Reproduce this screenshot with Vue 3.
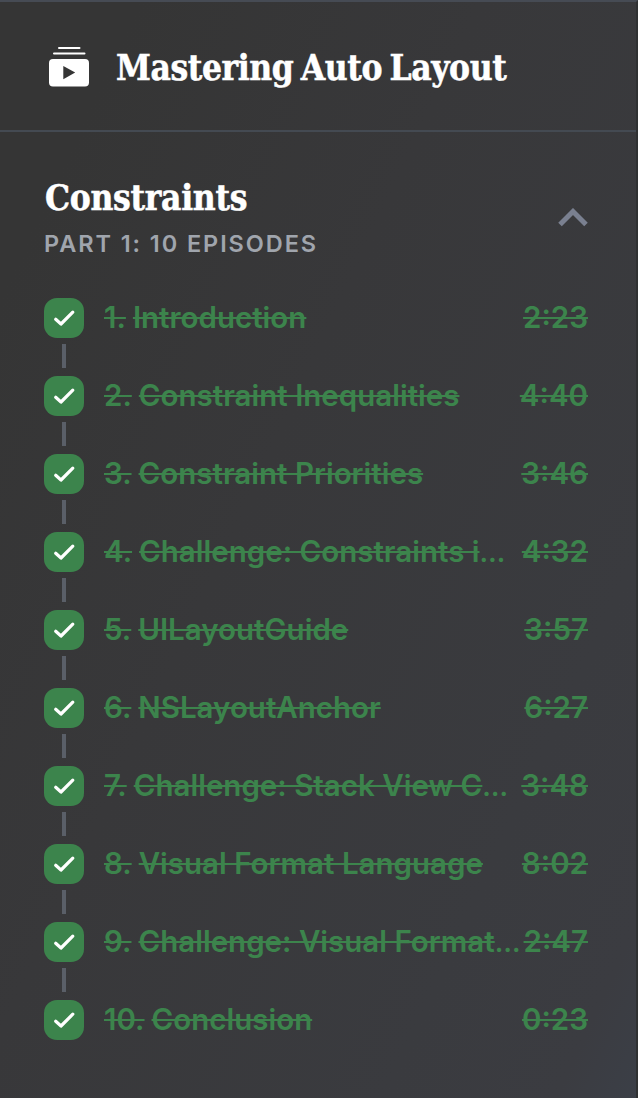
<script setup>
const episodes = [
  { number: 1, title: 'Introduction', time: '2:23' },
  { number: 2, title: 'Constraint Inequalities', time: '4:40' },
  { number: 3, title: 'Constraint Priorities', time: '3:46' },
  { number: 4, title: 'Challenge: Constraints i', cut: true, time: '4:32' },
  { number: 5, title: 'UILayoutGuide', time: '3:57' },
  { number: 6, title: 'NSLayoutAnchor', time: '6:27' },
  { number: 7, title: 'Challenge: Stack View C', cut: true, time: '3:48' },
  { number: 8, title: 'Visual Format Language', time: '8:02' },
  { number: 9, title: 'Challenge: Visual Format', cut: true, time: '2:47' },
  { number: 10, title: 'Conclusion', time: '0:23' },
]
</script>

<template>
  <aside class="panel">
    <header class="series">
      <svg class="series-icon" width="40" height="40" viewBox="0 0 40 40">
        <path d="M10 1h20.500M5 6.500h30.500" stroke="#fff" stroke-width="2" stroke-linecap="round" />
        <path fill="#fff" fill-rule="evenodd" d="M4 12H36a4 4 0 0 1 4 4V35.500a4 4 0 0 1-4 4H4a4 4 0 0 1-4-4V16a4 4 0 0 1 4-4ZM14.300 18.900V32.300L26.200 25.600Z" />
      </svg>
      <h1 class="heading">Mastering Auto Layout</h1>
    </header>
    <section class="chapter">
      <div class="chapter-head">
        <div>
          <h2 class="heading">Constraints</h2>
          <p class="part">Part 1: 10 Episodes</p>
        </div>
        <svg class="chevron" width="30" height="20" viewBox="0 0 30 20">
          <path d="M2 16.500 15 3.500 28 16.500" fill="none" stroke="#7a8090" stroke-width="5" />
        </svg>
      </div>
      <ol class="episodes">
        <li v-for="e in episodes" :key="e.number" class="episode">
          <div class="rail">
            <span class="badge">
              <svg width="40" height="40" viewBox="0 0 40 40">
                <path d="M11.700 21.300 17 26 28.800 14.200" fill="none" stroke="#fff" stroke-width="3.200" stroke-linecap="round" stroke-linejoin="round" />
              </svg>
            </span>
            <span v-if="e.number < 10" class="link"></span>
          </div>
          <span class="struck label">{{ e.number }}.</span>
          <span class="title label"><span class="struck">{{ e.title }}</span><span v-if="e.cut" class="dots">…</span></span>
          <span class="struck label time">{{ e.time }}</span>
        </li>
      </ol>
    </section>
  </aside>
</template>

<style>
body {
  background: #353535;
}
</style>

<style scoped>
.panel {
  box-sizing: border-box;
  width: 638px;
  height: 1098px;
  overflow: hidden;
  border-right: 2px solid #2f3132;
  border-top: 2px solid #464b54;
  background: linear-gradient(115deg, #353535 12%, #38383a 42%, #3a3b3f 78%, #3b3c41 93%, #3b3f47 100%);
  font-family: Inter, "Liberation Sans", sans-serif;
}
.series {
  display: flex;
  align-items: center;
  box-sizing: border-box;
  height: 130px;
  padding: 0 0 0 49px;
  border-bottom: 2px solid #444a52;
}
.series-icon {
  flex: none;
  margin-top: 2px;
}
.heading {
  margin: 0 0 0 1px;
  color: #fff;
  font: bold 35px/44px "DejaVu Serif Condensed", "DejaVu Serif", serif;
  font-stretch: condensed;
  white-space: nowrap;
  letter-spacing: -0.3px;
  -webkit-text-stroke: 0.5px #fff;
}
.series .heading {
  margin: 4px 0 0 27px;
  letter-spacing: -0.4px;
  word-spacing: -3.2px;
}
.chapter {
  padding: 44px 48px 0 44px;
}
.chapter-head {
  display: flex;
  justify-content: space-between;
  align-items: flex-start;
  height: 122px;
}
.part {
  margin: 8px 0 0;
  color: #a0a5ad;
  font-size: 23.5px;
  font-weight: 600;
  line-height: 32px;
  letter-spacing: 1.92px;
  text-transform: uppercase;
}
.chevron {
  margin-top: 32px;
}
.episodes {
  margin: 0;
  padding: 0;
  list-style: none;
}
.episode {
  display: flex;
  height: 78px;
  color: #3c844c;
  font-size: 29.5px;
  font-weight: 600;
  line-height: 40px;
  white-space: nowrap;
}
.label {
  margin-top: -1px;
}
.rail {
  display: flex;
  flex-direction: column;
  align-items: center;
  width: 40px;
  margin-right: 20px;
}
.badge {
  width: 40px;
  height: 40px;
  border-radius: 13px;
  background: #3c844c;
}
.badge svg {
  display: block;
}
.link {
  width: 4px;
  height: 24px;
  margin-top: 6px;
  background: #5a5f68;
}
.struck {
  text-decoration: line-through;
  text-decoration-thickness: 2px;
}
.title {
  margin-left: 7px;
}
.dots {
  font-size: 27px;
}
.time {
  margin-left: auto;
}
</style>
